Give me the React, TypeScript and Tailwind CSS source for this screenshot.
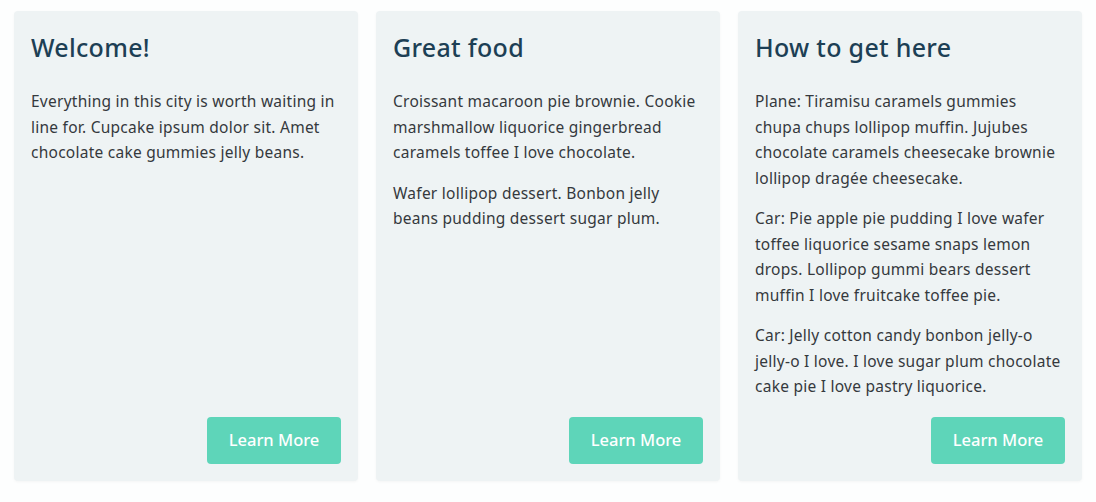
const cards = [
  {
    title: 'Welcome!',
    paras: [
      'Everything in this city is worth waiting in line for. Cupcake ipsum dolor sit. Amet chocolate cake gummies jelly beans.',
    ],
  },
  {
    title: 'Great food',
    paras: [
      'Croissant macaroon pie brownie. Cookie marshmallow liquorice gingerbread caramels toffee I love chocolate.',
      'Wafer lollipop dessert. Bonbon jelly beans pudding dessert sugar plum.',
    ],
  },
  {
    title: 'How to get here',
    paras: [
      'Plane: Tiramisu caramels gummies chupa chups lollipop muffin. Jujubes chocolate caramels cheesecake brownie lollipop dragée cheesecake.',
      'Car: Pie apple pie pudding I love wafer toffee liquorice sesame snaps lemon drops. Lollipop gummi bears dessert muffin I love fruitcake toffee pie.',
      'Car: Jelly cotton candy bonbon jelly-o jelly-o I love. I love sugar plum chocolate cake pie I love pastry liquorice.',
    ],
  },
];

export default function App() {
  return (
    <div
      className="w-[1096px] h-[502px] bg-[#fdfefe] flex gap-[18px] pl-[14px] pt-[11px]"
      style={{ fontFamily: '"Noto Sans", "Open Sans", sans-serif' }}
    >
      {cards.map((card) => (
        <div
          key={card.title}
          className="w-[344px] h-[470px] bg-[#eef3f4] rounded-[4px] shadow-[0_1px_3px_rgba(0,0,0,0.04)] p-[17px] flex flex-col"
        >
          <h2 className="text-[25px] leading-[30px] mt-[4px] font-medium text-[#1d3f55] tracking-[0.3px]">
            {card.title}
          </h2>
          <div className="mt-[27px] flex flex-col gap-[15px]">
            {card.paras.map((p, i) => (
              <p key={i} className="text-[15.5px] leading-[25.5px] tracking-[0.25px] text-[#35393d]">
                {p}
              </p>
            ))}
          </div>
          <div className="mt-auto flex justify-end">
            <button className="w-[134px] h-[47px] rounded-[4px] bg-[#5ed5b9] text-white text-[16.5px] font-medium">
              Learn More
            </button>
          </div>
        </div>
      ))}
    </div>
  );
}
